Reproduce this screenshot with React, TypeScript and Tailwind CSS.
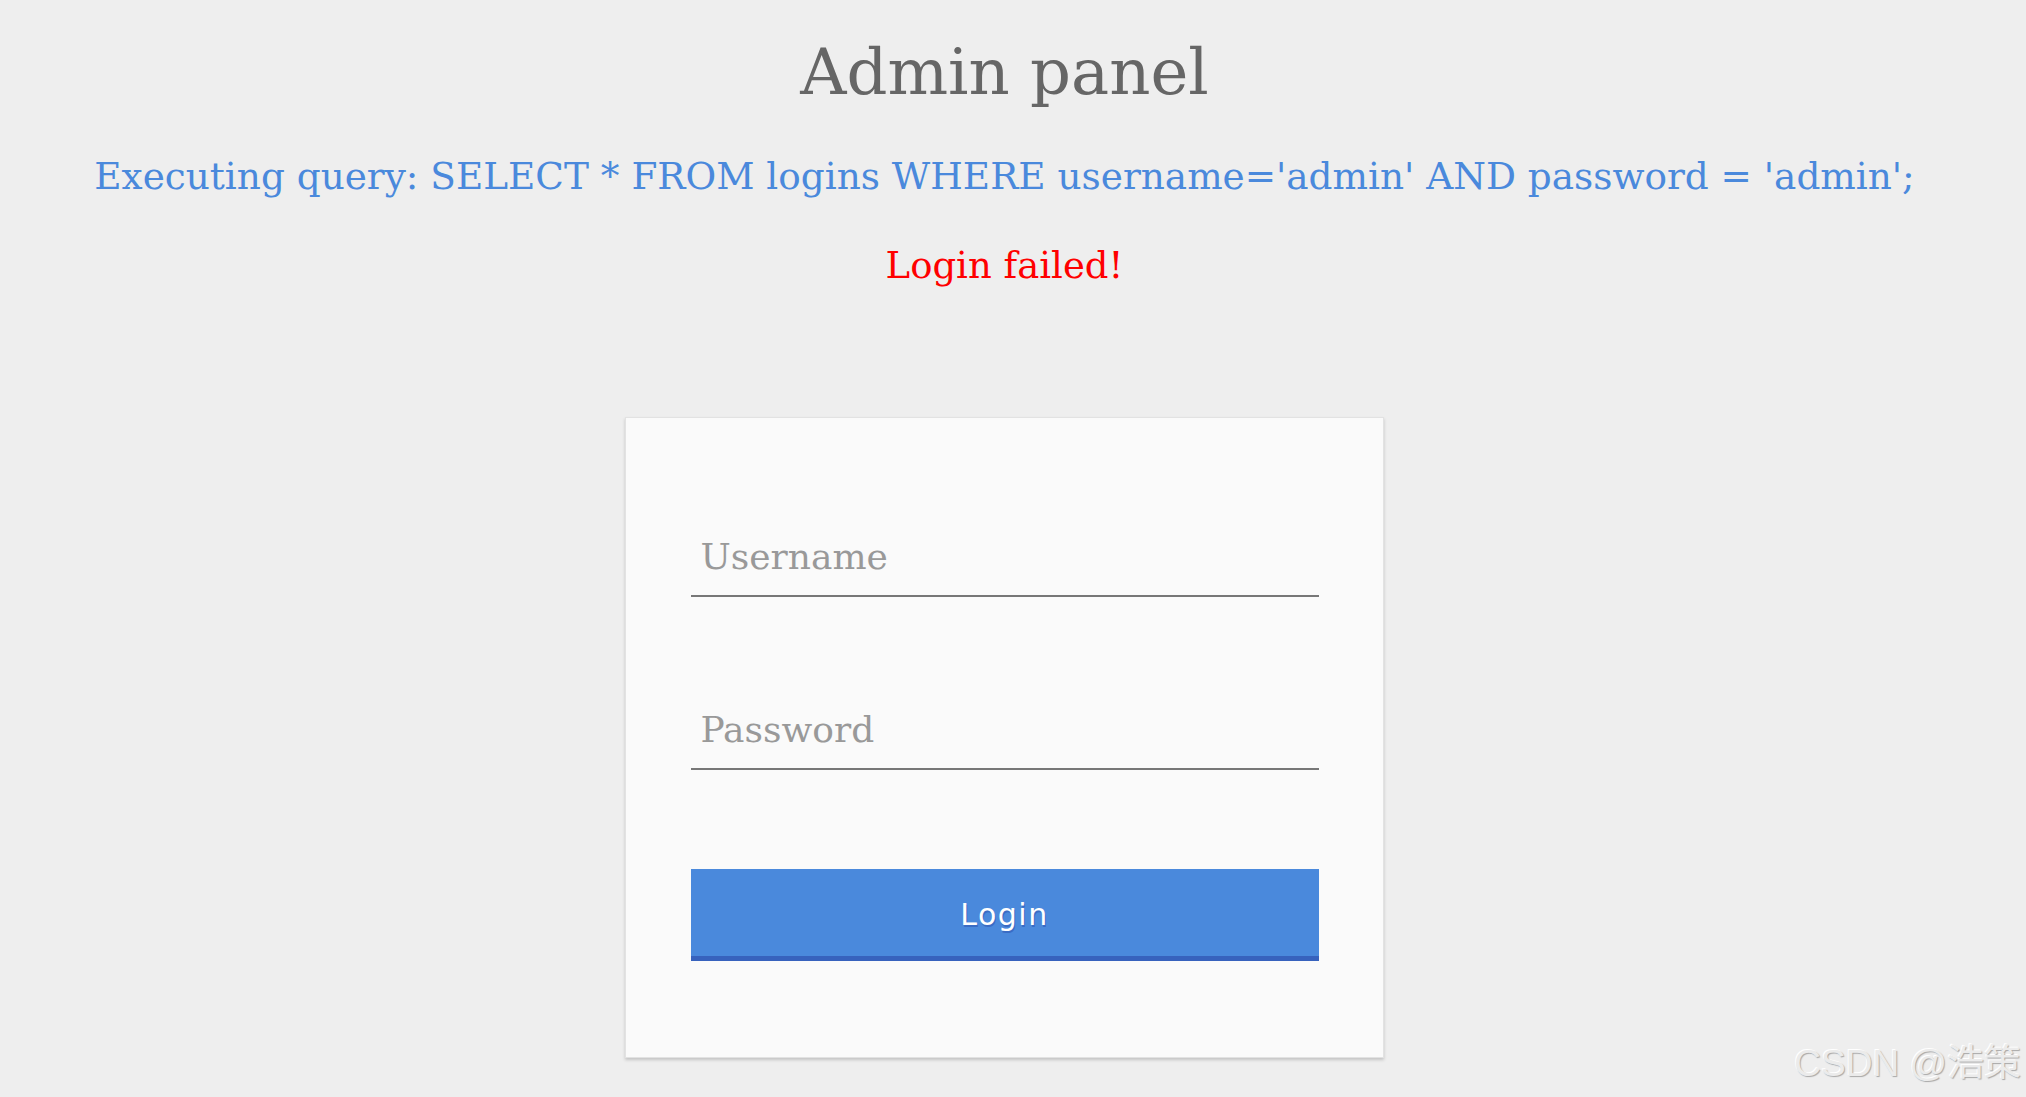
import { useState } from "react";

export default function App() {
  const [username, setUsername] = useState("");
  const [password, setPassword] = useState("");

  return (
    <div className="relative min-h-[1097px] w-full overflow-hidden bg-[#eeeeee] font-['DejaVu_Serif',serif]">
      <div className="flex flex-col items-center pr-[17px] pt-[35px]">
        {/* Cabecera */}
        <h1 className="text-[64px] leading-[74px] text-[#666666]">Admin panel</h1>
        <p className="mt-[45px] text-[37.4px] leading-[44px] text-[#4a89dc]">
          Executing query: SELECT * FROM logins WHERE username='admin' AND password = 'admin';
        </p>
        <p className="mt-[46px] text-[37px] leading-[44px] text-[#ff0000]">Login failed!</p>

        {/* Formulario */}
        <form
          className="mt-[129px] flex w-[759px] flex-col items-center border border-[#e2e2e2] bg-[#fafafa] pt-[99px] pb-[96px] shadow-[0_2px_3px_rgba(0,0,0,0.18)]"
          onSubmit={(e) => e.preventDefault()}
        >
          <input
            type="text"
            value={username}
            onChange={(e) => setUsername(e.target.value)}
            placeholder="Username"
            className="h-[80px] w-[628px] border-b-2 border-[#777777] bg-transparent pl-[10px] text-[36px] leading-[44px] text-[#555555] outline-none placeholder:text-[#999999]"
          />
          <input
            type="password"
            value={password}
            onChange={(e) => setPassword(e.target.value)}
            placeholder="Password"
            className="mt-[93px] h-[80px] w-[628px] border-b-2 border-[#777777] bg-transparent pl-[10px] text-[36px] leading-[44px] text-[#555555] outline-none placeholder:text-[#999999]"
          />
          <button
            type="submit"
            className="mt-[99px] flex h-[92px] w-[628px] items-center justify-center border-b-[5px] border-[#3762bd] bg-[#4a89dc] pt-[4px] font-['DejaVu_Sans',sans-serif] text-[30px] tracking-[1.5px] text-white [text-shadow:1px_2px_0_#3a6cc4]"
          >
            Login
          </button>
        </form>
      </div>

      {/* Marca de agua */}
      <div className="absolute right-[5px] top-[1045px] font-['Liberation_Sans','Noto_Sans_CJK_SC',sans-serif] text-[37px] leading-[37px] text-[#ebebeb] [text-shadow:1px_1px_1px_#a8a8a8,-1px_-1px_0_#ffffff]">
        CSDN @浩策
      </div>
    </div>
  );
}
